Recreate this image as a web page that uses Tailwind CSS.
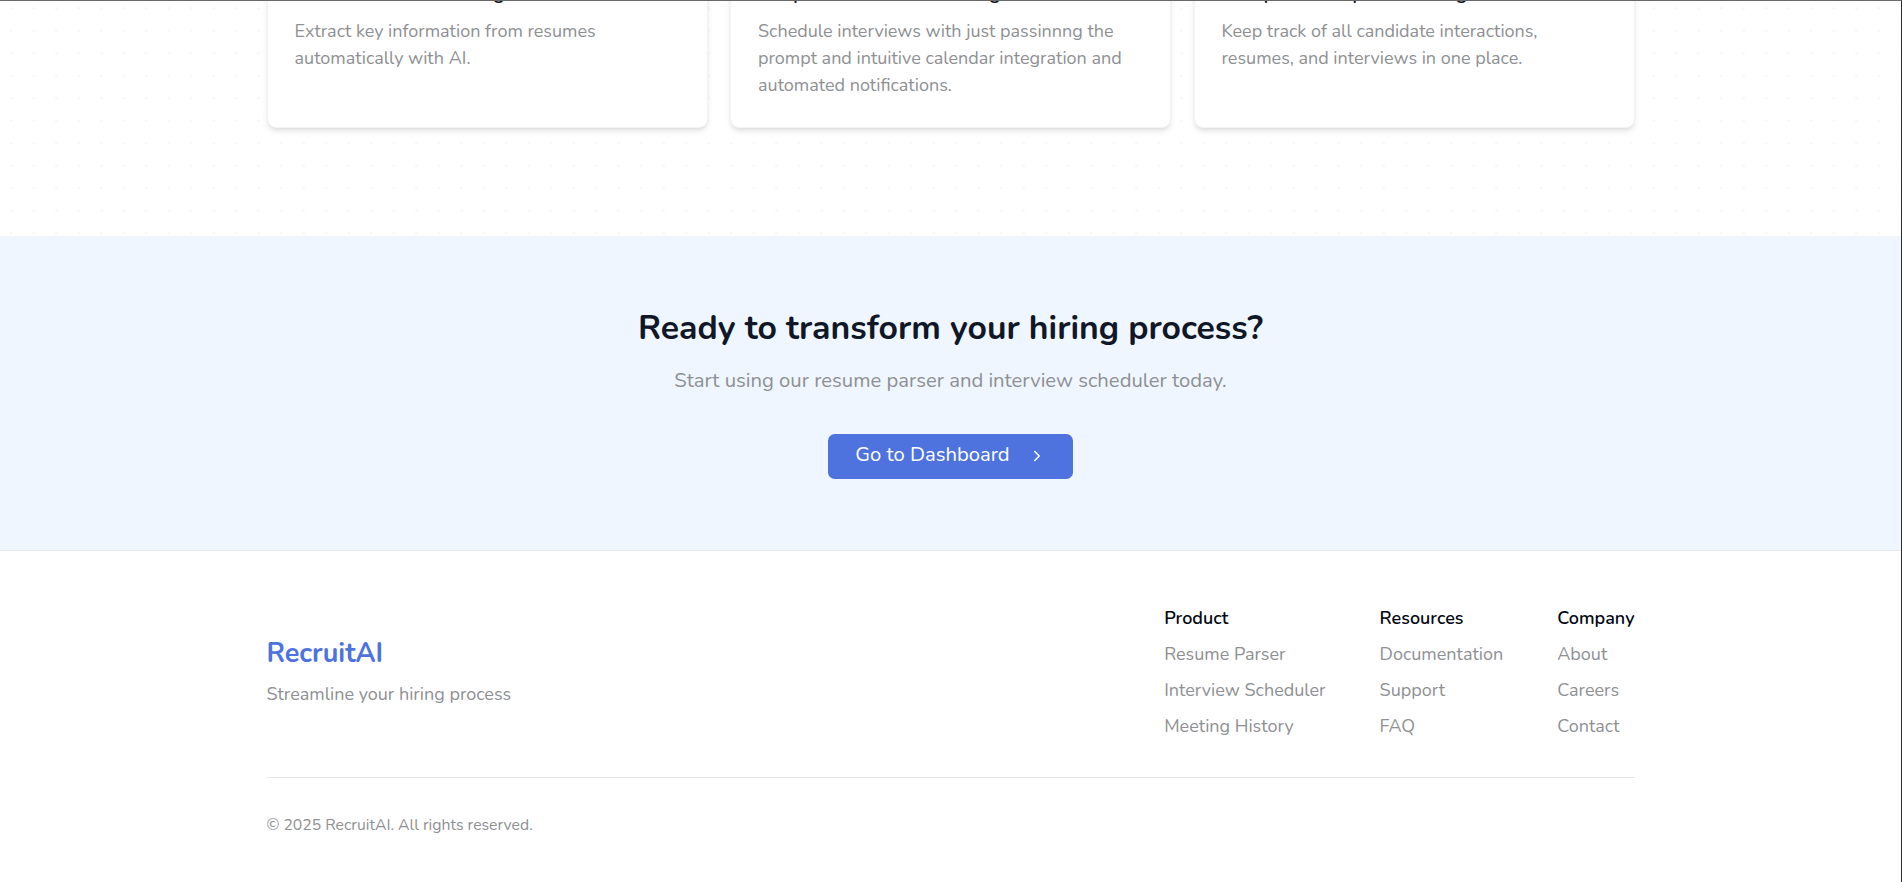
<!DOCTYPE html>
<html lang="en" class="text-[18px]">
<head>
<meta charset="utf-8">
<meta name="viewport" content="width=device-width, initial-scale=1">
<title>RecruitAI</title>
<script src="https://cdn.jsdelivr.net/npm/@tailwindcss/browser@4"></script>
</head>
<body class="min-h-screen overflow-x-hidden border-t border-r border-t-[#6b6869] border-r-[#2b2b2b] bg-white font-[Nunito,Lato,sans-serif] text-base text-[#8e9093]">
<main>
  <section class="overflow-hidden bg-[radial-gradient(circle,#f6f6f6_1px,transparent_1px)] bg-[size:1.25rem_1.25rem] bg-[position:0_-4px] px-6 pb-[108px]">
    <div class="mx-auto -mt-[52px] grid max-w-[76rem] grid-cols-1 gap-5 md:grid-cols-3">
      <article class="rounded-lg border border-[#f3f3f3] bg-white p-6 pb-[28px] shadow-md">
        <h3 class="mb-2 text-lg font-semibold text-gray-900">Smart Resume Parsing</h3>
        <p>Extract key information from resumes automatically with AI.</p>
      </article>
      <article class="rounded-lg border border-[#f3f3f3] bg-white p-6 pb-[28px] shadow-md">
        <h3 class="mb-2 text-lg font-semibold text-gray-900">Simplified Call Scheduling</h3>
        <p>Schedule interviews with just passinnng the prompt and intuitive calendar integration and automated notifications.</p>
      </article>
      <article class="rounded-lg border border-[#f3f3f3] bg-white p-6 pb-[28px] shadow-md">
        <h3 class="mb-2 text-lg font-semibold text-gray-900">Completed Report Sharing</h3>
        <p>Keep track of all candidate interactions, resumes, and interviews in one place.</p>
      </article>
    </div>
  </section>
  <section class="bg-[#eff6ff] px-6 pt-16 pb-[71px] text-center">
    <h2 class="mb-[17px] text-3xl font-bold text-gray-900">Ready to transform your hiring process?</h2>
    <p class="mb-[37px] text-lg">Start using our resume parser and interview scheduler today.</p>
    <button type="button" class="inline-flex h-[45px] items-center gap-4 rounded-md bg-[#4e73df] px-6 align-top text-lg text-white">
      <span class="pb-0.5">Go to Dashboard</span>
      <svg class="size-4" viewBox="0 0 24 24" fill="none" stroke="currentColor" stroke-width="2" stroke-linecap="round" stroke-linejoin="round" aria-hidden="true"><path d="m9 18 6-6-6-6"/></svg>
    </button>
  </section>
</main>
<footer class="border-t border-gray-200 px-6 pt-12 pb-10">
  <div class="mx-auto max-w-[76rem]">
    <div class="flex flex-wrap items-center justify-between gap-8">
      <div>
        <h2 class="mb-2 text-2xl font-bold text-[#4e73df]">RecruitAI</h2>
        <p>Streamline your hiring process</p>
      </div>
      <nav class="flex flex-wrap gap-12" aria-label="Footer">
        <div>
          <h3 class="mb-2 font-semibold text-gray-950">Product</h3>
          <ul class="flex flex-col gap-2">
            <li><a href="#">Resume Parser</a></li>
            <li><a href="#">Interview Scheduler</a></li>
            <li><a href="#">Meeting History</a></li>
          </ul>
        </div>
        <div>
          <h3 class="mb-2 font-semibold text-gray-950">Resources</h3>
          <ul class="flex flex-col gap-2">
            <li><a href="#">Documentation</a></li>
            <li><a href="#">Support</a></li>
            <li><a href="#">FAQ</a></li>
          </ul>
        </div>
        <div>
          <h3 class="mb-2 font-semibold text-gray-950">Company</h3>
          <ul class="flex flex-col gap-2">
            <li><a href="#">About</a></li>
            <li><a href="#">Careers</a></li>
            <li><a href="#">Contact</a></li>
          </ul>
        </div>
      </nav>
    </div>
    <p class="mt-[37px] border-t border-gray-200 pt-8 text-sm">© 2025 RecruitAI. All rights reserved.</p>
  </div>
</footer>
</body>
</html>
